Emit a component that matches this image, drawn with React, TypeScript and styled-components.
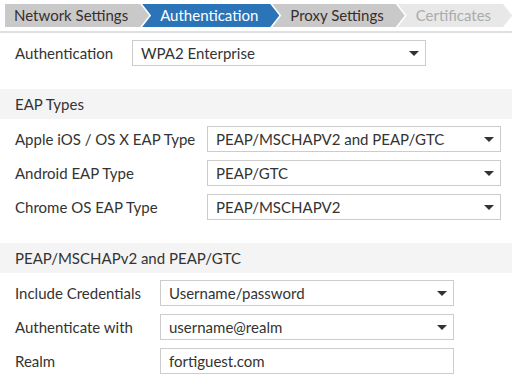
import React from 'react';
import styled, { createGlobalStyle } from 'styled-components';

const steps = [
  { label: 'Network Settings', state: 'done' },
  { label: 'Authentication', state: 'active' },
  { label: 'Proxy Settings', state: 'done' },
  { label: 'Certificates', state: 'todo' },
] as const;

type StepState = (typeof steps)[number]['state'];

const App: React.FC = () => (
  <>
    <GlobalStyle />
    <Page>
      <Wizard>
        {steps.map((step, i) => (
          <Step key={step.label} $state={step.state} $first={i === 0}>
            {step.label}
          </Step>
        ))}
      </Wizard>

      <Section $labelWidth={117}>
        <Row>
          <Label>Authentication</Label>
          <Select>WPA2 Enterprise</Select>
        </Row>
      </Section>

      <SectionHeader>EAP Types</SectionHeader>
      <Section $labelWidth={192}>
        <Row>
          <Label>Apple iOS / OS X EAP Type</Label>
          <Select>PEAP/MSCHAPV2 and PEAP/GTC</Select>
        </Row>
        <Row>
          <Label>Android EAP Type</Label>
          <Select>PEAP/GTC</Select>
        </Row>
        <Row>
          <Label>Chrome OS EAP Type</Label>
          <Select>PEAP/MSCHAPV2</Select>
        </Row>
      </Section>

      <SectionHeader>PEAP/MSCHAPv2 and PEAP/GTC</SectionHeader>
      <Section $labelWidth={145}>
        <Row>
          <Label>Include Credentials</Label>
          <Select>Username/password</Select>
        </Row>
        <Row>
          <Label>Authenticate with</Label>
          <Select>username@realm</Select>
        </Row>
        <Row>
          <Label>Realm</Label>
          <Input>fortiguest.com</Input>
        </Row>
      </Section>
    </Page>
  </>
);

const Select: React.FC<{ children: React.ReactNode }> = ({ children }) => (
  <Field>
    <span>{children}</span>
    <Caret />
  </Field>
);

export default App;

const GlobalStyle = createGlobalStyle`
  body {
    margin: 0;
    background: #fff;
    font-family: Lato, "Open Sans", sans-serif;
    font-size: 15px;
    color: #333;
  }
`;

const Page = styled.div`
  width: 512px;
  height: 377px;
  overflow: hidden;
`;

const Wizard = styled.div`
  display: flex;
  padding: 4px 0 0 5px;
  border-bottom: 2px solid #e0e0e0;
  box-sizing: border-box;
  height: 33px;
`;

const stepColors: Record<StepState, { bg: string; fg: string }> = {
  done: { bg: '#c9c9c9', fg: '#3a2d2d' },
  active: { bg: '#2b74b8', fg: '#ffffff' },
  todo: { bg: '#e8e8e8', fg: '#ababab' },
};

const Step = styled.div<{ $state: StepState; $first: boolean }>`
  height: 23px;
  line-height: 23px;
  white-space: nowrap;
  padding: 0 21px 0 ${({ $first }) => ($first ? 9 : 18)}px;
  margin-left: ${({ $first }) => ($first ? 0 : -7)}px;
  background: ${({ $state }) => stepColors[$state].bg};
  color: ${({ $state }) => stepColors[$state].fg};
  clip-path: ${({ $first }) =>
    $first
      ? 'polygon(0 0, calc(100% - 9px) 0, 100% 50%, calc(100% - 9px) 100%, 0 100%)'
      : 'polygon(0 0, calc(100% - 9px) 0, 100% 50%, calc(100% - 9px) 100%, 0 100%, 9px 50%)'};
`;

const SectionHeader = styled.div`
  background: #f4f4f4;
  height: 30px;
  line-height: 30px;
  padding-left: 15px;
  margin-top: 23px;
`;

const Section = styled.div<{ $labelWidth: number }>`
  display: grid;
  grid-template-columns: ${({ $labelWidth }) => $labelWidth}px 294px;
  row-gap: 8px;
  padding: 7px 0 0 15px;
`;

const Row = styled.div`
  display: contents;
`;

const Label = styled.div`
  height: 26px;
  line-height: 26px;
  white-space: nowrap;
`;

const Field = styled.div`
  height: 26px;
  box-sizing: border-box;
  border: 1px solid #cccccc;
  padding: 0 6px 0 8px;
  display: flex;
  align-items: center;
  justify-content: space-between;
  background: #fff;
  color: #333;
`;

const Input = styled(Field)``;

const Caret = styled.span`
  width: 0;
  height: 0;
  border-left: 5px solid transparent;
  border-right: 5px solid transparent;
  border-top: 5px solid #333;
`;
